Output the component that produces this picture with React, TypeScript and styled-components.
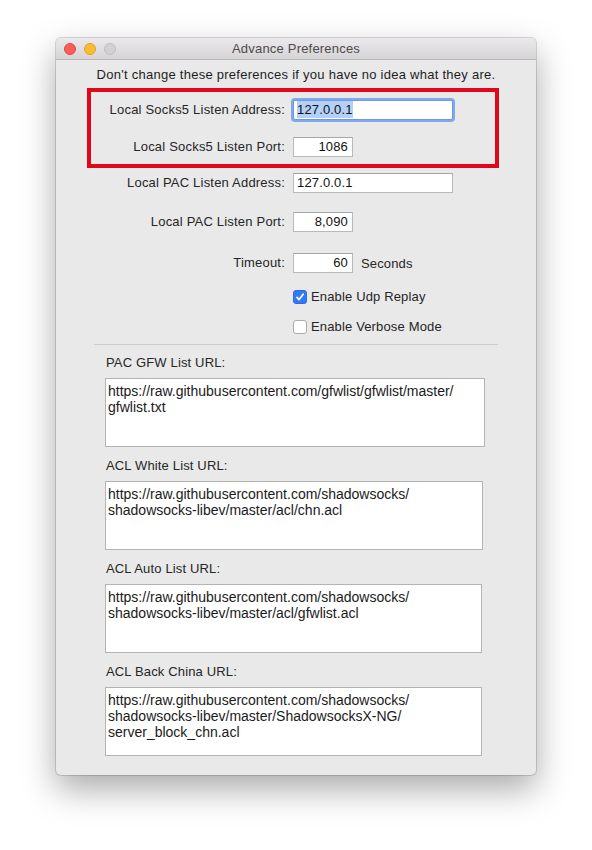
import React from 'react';
import styled, { createGlobalStyle } from 'styled-components';

const GlobalStyle = createGlobalStyle`
  html, body {
    margin: 0;
    padding: 0;
    background: #ffffff;
  }
  body {
    font-family: 'Liberation Sans', Arial, sans-serif;
    font-size: 13px;
    letter-spacing: 0.15px;
    color: #1e1e1e;
  }
`;

const Page = styled.div`
  padding: 38px 0 0 56px;
  height: 850px;
  box-sizing: border-box;
`;

const Window = styled.div`
  width: 480px;
  border-radius: 5px;
  overflow: hidden;
  background: #e9e9e9;
  box-shadow: 0 0 0 1px rgba(0, 0, 0, 0.14), 0 14px 34px rgba(0, 0, 0, 0.34);
`;

const TitleBar = styled.div`
  height: 22px;
  display: grid;
  grid-template-columns: 1fr auto 1fr;
  align-items: center;
  background: linear-gradient(#ebe9eb, #d6d4d6);
  border-bottom: 1px solid #b9b9b9;
  box-sizing: border-box;
`;

const Lights = styled.div`
  display: flex;
  gap: 8px;
  padding-left: 8px;
`;

const Light = styled.span<{ $fill: string; $edge: string }>`
  width: 12px;
  height: 12px;
  border-radius: 50%;
  box-sizing: border-box;
  background: ${(p) => p.$fill};
  border: 1px solid ${(p) => p.$edge};
`;

const Title = styled.div`
  font-size: 13px;
  letter-spacing: 0.2px;
  color: #4b4b4b;
`;

const Content = styled.div`
  padding: 7px 0 19px;
`;

const Intro = styled.div`
  text-align: center;
  line-height: 16px;
  letter-spacing: 0.26px;
  color: #1e1e1e;
`;

const Highlight = styled.div`
  position: relative;
  margin-top: 17px;
  &::after {
    content: '';
    position: absolute;
    top: -12px;
    left: 31px;
    width: 412px;
    height: 80px;
    border: 4px solid #e0061c;
    box-sizing: border-box;
    pointer-events: none;
  }
`;

const Row = styled.div<{ $top: number }>`
  display: grid;
  grid-template-columns: 229px auto;
  column-gap: 8px;
  align-items: center;
  margin-top: ${(p) => p.$top}px;
`;

const Label = styled.div`
  text-align: right;
  line-height: 16px;
  letter-spacing: 0.2px;
  color: #262626;
`;

const Cell = styled.div`
  display: flex;
  align-items: center;
  gap: 8px;
`;

const Field = styled.div<{ $width: number; $right?: boolean; $focused?: boolean }>`
  width: ${(p) => p.$width}px;
  height: 20px;
  box-sizing: border-box;
  background: #ffffff;
  border: 1px solid ${(p) => (p.$focused ? '#6f98e2' : '#b9b9b9')};
  border-top-color: ${(p) => (p.$focused ? '#6f98e2' : '#a6a6a6')};
  border-radius: ${(p) => (p.$focused ? '2px' : '0')};
  box-shadow: ${(p) => (p.$focused ? '0 0 0 2px #82a8ec' : 'none')};
  padding: 0 4px 0 3px;
  line-height: 18px;
  text-align: ${(p) => (p.$right ? 'right' : 'left')};
  color: #111111;
  white-space: nowrap;
  overflow: hidden;
`;

const Selected = styled.span`
  background: #b3d1f6;
  padding: 1px 0;
`;

const Unit = styled.span`
  color: #262626;
`;

const CheckRow = styled.label`
  display: flex;
  align-items: center;
  gap: 4px;
  height: 16px;
  line-height: 16px;
  color: #262626;
`;

const Box = styled.span<{ $checked?: boolean }>`
  width: 14px;
  height: 14px;
  box-sizing: border-box;
  border-radius: 3px;
  display: flex;
  align-items: center;
  justify-content: center;
  background: ${(p) => (p.$checked ? '#3379f5' : '#ffffff')};
  border: 1px solid ${(p) => (p.$checked ? '#2c6be0' : '#acacac')};
`;

const Separator = styled.div`
  height: 1px;
  background: #cdcdcd;
  margin: 9px 38px 0;
`;

const Section = styled.div<{ $top: number }>`
  margin: ${(p) => p.$top}px 0 0 49px;
`;

const SectionLabel = styled.div`
  line-height: 16px;
  padding-left: 1px;
  color: #262626;
  margin-bottom: 7px;
`;

const TextArea = styled.div<{ $width: number }>`
  width: ${(p) => p.$width}px;
  height: 69px;
  box-sizing: border-box;
  background: #ffffff;
  border: 1px solid #b3b3b3;
  padding: 4px 2px;
  font-size: 14px;
  letter-spacing: 0;
  line-height: 16px;
  color: #1a1a1a;
  white-space: pre-line;
  overflow: hidden;
`;

const urls = [
  {
    label: 'PAC GFW List URL:',
    width: 380,
    text: 'https://raw.githubusercontent.com/gfwlist/gfwlist/master/\ngfwlist.txt',
  },
  {
    label: 'ACL White List URL:',
    width: 378,
    text: 'https://raw.githubusercontent.com/shadowsocks/\nshadowsocks-libev/master/acl/chn.acl',
  },
  {
    label: 'ACL Auto List URL:',
    width: 377,
    text: 'https://raw.githubusercontent.com/shadowsocks/\nshadowsocks-libev/master/acl/gfwlist.acl',
  },
  {
    label: 'ACL Back China URL:',
    width: 377,
    text: 'https://raw.githubusercontent.com/shadowsocks/\nshadowsocks-libev/master/ShadowsocksX-NG/\nserver_block_chn.acl',
  },
];

const Check = () => (
  <svg width="10" height="10" viewBox="0 0 10 10">
    <path d="M2 5.4 L4.1 7.6 L8.2 2.2" fill="none" stroke="#ffffff" strokeWidth="1.7" strokeLinecap="round" strokeLinejoin="round" />
  </svg>
);

export default function App() {
  return (
    <Page>
      <GlobalStyle />
      <Window>
        <TitleBar>
          <Lights>
            <Light $fill="#fc5f57" $edge="#e0443e" />
            <Light $fill="#fdbc2e" $edge="#dea123" />
            <Light $fill="#d2d2d2" $edge="#bdbdbd" />
          </Lights>
          <Title>Advance Preferences</Title>
          <div />
        </TitleBar>
        <Content>
          <Intro>Don't change these preferences if you have no idea what they are.</Intro>

          <Highlight>
            <Row $top={0}>
              <Label>Local Socks5 Listen Address:</Label>
              <Cell>
                <Field $width={160} $focused>
                  <Selected>127.0.0.1</Selected>
                </Field>
              </Cell>
            </Row>
            <Row $top={17}>
              <Label>Local Socks5 Listen Port:</Label>
              <Cell>
                <Field $width={60} $right>1086</Field>
              </Cell>
            </Row>
          </Highlight>

          <Row $top={16}>
            <Label>Local PAC Listen Address:</Label>
            <Cell>
              <Field $width={160}>127.0.0.1</Field>
            </Cell>
          </Row>
          <Row $top={19}>
            <Label>Local PAC Listen Port:</Label>
            <Cell>
              <Field $width={60} $right>8,090</Field>
            </Cell>
          </Row>
          <Row $top={21}>
            <Label>Timeout:</Label>
            <Cell>
              <Field $width={60} $right>60</Field>
              <Unit>Seconds</Unit>
            </Cell>
          </Row>
          <Row $top={16}>
            <div />
            <CheckRow>
              <Box $checked>
                <Check />
              </Box>
              Enable Udp Replay
            </CheckRow>
          </Row>
          <Row $top={14}>
            <div />
            <CheckRow>
              <Box />
              Enable Verbose Mode
            </CheckRow>
          </Row>

          <Separator />

          {urls.map((u, i) => (
            <Section key={u.label} $top={i === 0 ? 10 : 11}>
              <SectionLabel>{u.label}</SectionLabel>
              <TextArea $width={u.width}>{u.text}</TextArea>
            </Section>
          ))}
        </Content>
      </Window>
    </Page>
  );
}
